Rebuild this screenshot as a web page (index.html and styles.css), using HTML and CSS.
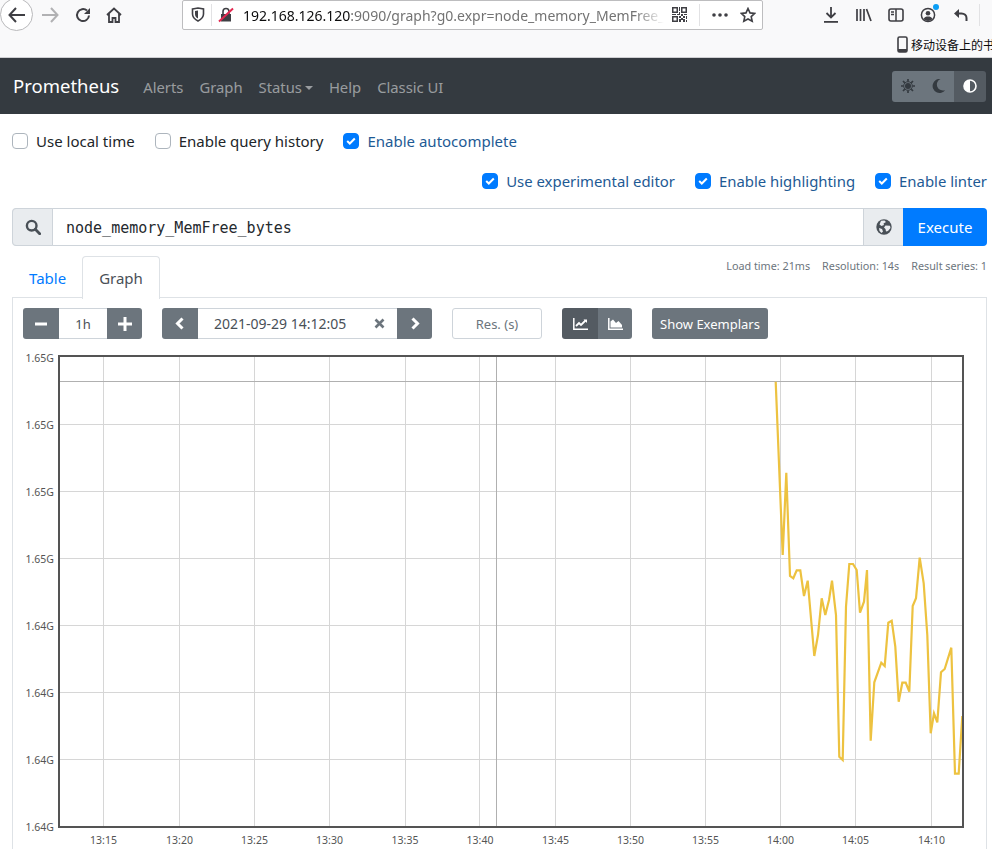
FILE: index.html
```html
<!DOCTYPE html>
<html lang="en">
<head>
<meta charset="utf-8">
<title>Prometheus Time Series Collection and Processing Server</title>
<link rel="stylesheet" href="styles.css">
</head>
<body>
<header class="browser">
  <div class="toolbar">
    <span class="back"><svg width="18" height="16" viewBox="0 0 18 16"><path d="M8 1 1.500 8 8 15M2 8h15" class="ic" stroke-width="2"/></svg></span>
    <svg class="t-forward" width="18" height="16" viewBox="0 0 18 16"><path d="M10 1l6.500 7L10 15M16 8H1" class="ic faint" stroke-width="2"/></svg>
    <svg class="t-reload" width="16" height="16" viewBox="0 0 16 16"><path d="M14 8.500A6 6 0 1 1 12 3.600" class="ic" stroke-width="2"/><path d="M15 1v6H9z" class="fill"/></svg>
    <svg class="t-home" width="16" height="16" viewBox="0 0 16 16"><path d="M1 8 8 1.500 15 8M3 6.500V15h3.500v-4h3v4H13V6.500" class="ic" stroke-width="1.800"/></svg>
    <div class="urlbar">
      <svg class="u-shield" width="14" height="15" viewBox="0 0 14 15"><path d="M1.500 2 7 1l5.500 1v5c0 3.500-2.500 5.500-5.500 7C4 12.500 1.500 10.500 1.500 7z" class="ic" stroke-width="1.600"/><path d="M7 3.500V11.500C5 10.500 4 9 4 7V4z" class="fill"/></svg>
      <span class="u-sep"></span>
      <svg class="u-lock" width="16" height="16" viewBox="0 0 16 16"><path d="M3 7h10v7.500H3z" class="fill"/><path d="M5 7V4.500a3 3 0 0 1 6 0V7" class="ic" stroke-width="1.600"/><path d="M1 14.500 15 1.500" class="slash"/></svg>
      <div class="u-text"><span class="u-host">192.168.126.120</span>:9090/graph?g0.expr=node_memory_MemFree_</div>
      <svg class="u-qr" width="15" height="15" viewBox="0 0 15 15"><path d="M0 0h6v6H0zM1.500 1.500v3h3v-3zM9 0h6v6H9zM10.500 1.500v3h3v-3zM0 9h6v6H0zM1.500 10.500v3h3v-3zM7 0h1v4H7zM7 5h1v3H7zM0 7h4v1H0zM5 7h2v1H5zM9 7h2v2H9zM12 7h3v1h-3zM7 9h2v2H7zM11 9h2v2h-2zM14 9h1v3h-1zM9 11h2v2H9zM7 12h2v3H7zM11 12h2v3h-2zM14 13h1v2h-1z" class="fill"/></svg>
      <span class="u-sep u-sep2"></span>
      <svg class="u-dots" width="16" height="4" viewBox="0 0 16 4"><circle cx="2" cy="2" r="1.800" class="fill"/><circle cx="8" cy="2" r="1.800" class="fill"/><circle cx="14" cy="2" r="1.800" class="fill"/></svg>
      <svg class="u-star" width="16" height="16" viewBox="0 0 16 16"><path d="M8 1.500l2 4.400 4.700.5-3.500 3.200 1 4.700L8 12l-4.200 2.300 1-4.700L1.300 6.400 6 5.900z" class="ic" stroke-width="1.600"/></svg>
    </div>
    <svg class="t-down" width="14" height="16" viewBox="0 0 14 16"><path d="M7 0v10M2.500 6 7 10.500 11.500 6" class="ic" stroke-width="1.800"/><path d="M0 14h14v1.800H0z" class="fill"/></svg>
    <svg class="t-lib" width="16" height="14" viewBox="0 0 16 14"><path d="M1 1v12M4.500 1v12M8 1v12M10.500 1l4.500 12" class="ic" stroke-width="1.700"/></svg>
    <svg class="t-side" width="16" height="14" viewBox="0 0 16 14"><rect x="1" y="1" width="14" height="12" rx="2" class="ic" stroke-width="1.600"/><path d="M8 1v12M3 4h3M3 6.500h3" class="ic" stroke-width="1.500"/></svg>
    <span class="t-acct"><svg width="16" height="16" viewBox="0 0 16 16"><circle cx="8" cy="8" r="6.600" class="ic" stroke-width="1.500"/><circle cx="8" cy="6.300" r="2.300" class="fill"/><path d="M3.500 12c1-2 2.500-2.500 4.500-2.500s3.500.5 4.500 2.500C10.500 14.500 5.500 14.500 3.500 12z" class="fill"/></svg><i class="dot"></i></span>
    <svg class="t-undo" width="15" height="14" viewBox="0 0 15 14"><path d="M1 5.500 6 1v9z" class="fill"/><path d="M5 5.500h3.500c3 0 5 2 5 4.500v3" class="ic" stroke-width="2"/></svg>
    <span class="t-sep"></span>
  </div>
  <div class="bookmarks">
    <svg class="bm-icon" width="11" height="17" viewBox="0 0 11 17"><rect x="1" y="1" width="9" height="15" rx="1.500" class="ic" stroke-width="1.600"/><path d="M1 13h9v3H1z" class="fill"/></svg>
    <span class="bm-text">移动设备上的书签</span>
  </div>
</header>

<nav class="navbar">
  <a class="brand">Prometheus</a>
  <a class="nav-link">Alerts</a>
  <a class="nav-link">Graph</a>
  <a class="nav-link">Status<i class="caret"></i></a>
  <a class="nav-link">Help</a>
  <a class="nav-link">Classic UI</a>
  <div class="theme">
    <span class="theme-btn"><svg width="14" height="14" viewBox="0 0 14 14"><circle cx="7" cy="7" r="3" class="t-f"/><circle cx="7" cy="7" r="4.300" fill="none" stroke="#343a40" stroke-width="1"/><path d="M7 0v2.500M7 11.500V14M0 7h2.500M11.500 7H14M2 2l1.800 1.800M10.200 10.200 12 12M12 2l-1.800 1.800M3.800 10.200 2 12" stroke="#343a40" stroke-width="1.700"/></svg></span>
    <span class="theme-btn"><svg width="14" height="14" viewBox="0 0 14 14"><path d="M8.500 0A7 7 0 1 0 13.300 11 6 6 0 0 1 8.500 0z" class="t-f"/></svg></span>
    <span class="theme-btn on"><svg width="14" height="14" viewBox="0 0 14 14"><circle cx="7" cy="7" r="6" fill="none" stroke="#fff" stroke-width="1.600"/><path d="M7 1a6 6 0 0 0 0 12z" fill="#fff"/></svg></span>
  </div>
</nav>

<main class="main">
  <div class="opts">
    <label class="check"><span class="box"></span>Use local time</label>
    <label class="check"><span class="box"></span>Enable query history</label>
    <label class="check on"><span class="box"><svg width="10" height="8" viewBox="0 0 10 8"><path d="M1.200 4 3.800 6.500 8.800 1.500" class="tick"/></svg></span>Enable autocomplete</label>
  </div>
  <div class="opts right">
    <label class="check on"><span class="box"><svg width="10" height="8" viewBox="0 0 10 8"><path d="M1.200 4 3.800 6.500 8.800 1.500" class="tick"/></svg></span>Use experimental editor</label>
    <label class="check on"><span class="box"><svg width="10" height="8" viewBox="0 0 10 8"><path d="M1.200 4 3.800 6.500 8.800 1.500" class="tick"/></svg></span>Enable highlighting</label>
    <label class="check on"><span class="box"><svg width="10" height="8" viewBox="0 0 10 8"><path d="M1.200 4 3.800 6.500 8.800 1.500" class="tick"/></svg></span>Enable linter</label>
  </div>

  <div class="query">
    <span class="addon first"><svg width="16" height="16" viewBox="0 0 16 16"><circle cx="6.700" cy="6.700" r="4.800" fill="none" stroke="#495057" stroke-width="2.400"/><path d="M10.300 10.300 14.700 14.700" stroke="#495057" stroke-width="2.800" stroke-linecap="round"/></svg></span>
    <div class="expr">node_memory_MemFree_bytes</div>
    <span class="addon globe"><svg width="16" height="16" viewBox="0 0 16 16"><circle cx="8" cy="8" r="7.700" fill="#495057"/><path d="M5 1.800 8.500 1.500 10 3 7.500 4.500 8 6 5.500 7 3.500 5.500zM9.500 6.500 14 6.800 14.500 9 12 12 10 12.500 9.500 10 8 8.500zM3 9l3 1 1 2.500-1.500 1.500L3.500 12z" fill="#e9ecef"/></svg></span>
    <button class="execute">Execute</button>
  </div>

  <div class="tabs-row">
    <div class="tabs">
      <a class="tab">Table</a>
      <a class="tab active">Graph</a>
    </div>
    <div class="stats"><span>Load time: 21ms</span><span>Resolution: 14s</span><span>Result series: 1</span></div>
  </div>

  <section class="card">
    <div class="controls">
      <div class="group">
        <button class="gbtn w36"><svg width="12" height="12" viewBox="0 0 12 12"><path d="M0 6h12" class="ctl"/></svg></button>
        <div class="gfield w48">1h</div>
        <button class="gbtn w35"><svg width="14" height="14" viewBox="0 0 14 14"><path d="M0 7h14M7 0v14" class="ctl"/></svg></button>
      </div>
      <div class="group">
        <button class="gbtn w36"><svg width="10" height="13" viewBox="0 0 10 13"><path d="M7.500 1.500 2.500 6.500 7.500 11.500" class="ctl"/></svg></button>
        <div class="gfield date"><span class="date-text">2021-09-29 14:12:05</span><svg class="clear" width="11" height="11" viewBox="0 0 11 11"><path d="M1.500 1.500l8 8M9.500 1.500l-8 8" fill="none" stroke="#6c757d" stroke-width="2.600"/></svg></div>
        <button class="gbtn w35"><svg width="10" height="13" viewBox="0 0 10 13"><path d="M2.500 1.500 7.500 6.500 2.500 11.500" class="ctl"/></svg></button>
      </div>
      <div class="res">Res. (s)</div>
      <div class="group">
        <button class="gbtn w36 dark"><svg width="15" height="12" viewBox="0 0 15 12"><path d="M.8 0v11.200H15" fill="none" stroke="#fff" stroke-width="1.500"/><path d="M3 8 6 5l2 2 4.500-4.500" fill="none" stroke="#fff" stroke-width="1.800"/><path d="M10.500 1.500H14V5z" fill="#fff"/></svg></button>
        <button class="gbtn w34"><svg width="15" height="12" viewBox="0 0 15 12"><path d="M.8 0v11.200H15" fill="none" stroke="#fff" stroke-width="1.500"/><path d="M2.500 9.500V3.500L5 1.500 8 5l2.500-2 3.500 4v2.500z" fill="#fff"/></svg></button>
      </div>
      <button class="exemplars">Show Exemplars</button>
    </div>
    <svg class="chart" width="973" height="510" viewBox="13 345 973 510">
      <g class="grid">
        <path d="M103.500 357V827M179.500 357V827M254.500 357V827M329.500 357V827M405.500 357V827M479.500 357V827M555.500 357V827M630.500 357V827M705.500 357V827M780.500 357V827M855.500 357V827M931.500 357V827"/>
        <path d="M60 424.500H963M60 491.500H963M60 558.500H963M60 625.500H963M60 692.500H963M60 759.500H963"/>
      </g>
      <path class="cross" d="M496.500 357V827M60 381.500H963"/>
      <polyline class="series" points="775.7,381.7 782.700,555 786.300,472.700 790,576 793.300,578.300 796.700,570.300 800.300,570.300 804,596 807.700,580.700 814.300,656 818,635 821.700,598.300 825.300,615 829,600 832,580.700 836,615 839.300,756.700 842.700,760 846,606.700 849.300,564 853,564 856.700,570 860,612.700 864,601.700 867,570 870.700,740.700 874.300,682.300 881.300,662.700 884.700,666 888.300,622.700 891.700,620.700 895.300,646.700 898.700,701.700 902.300,682.700 905.700,682.700 909.300,691.700 912.700,606 916,598.300 919.700,557.700 923.700,583.300 927.300,635 930.700,733.300 934,713.300 937.300,722.300 941,672.300 944.700,669 951.300,647.700 955,773.700 958.700,773.700 962.300,716"/>
      <rect class="frame" x="59" y="356" width="904" height="471"/>
      <g class="ylab">
        <text x="54" y="362">1.65G</text><text x="54" y="429">1.65G</text><text x="54" y="496">1.65G</text><text x="54" y="563">1.65G</text><text x="54" y="630">1.64G</text><text x="54" y="697">1.64G</text><text x="54" y="764">1.64G</text><text x="54" y="831">1.64G</text>
      </g>
      <g class="xlab">
        <text x="103.500" y="844">13:15</text><text x="179.500" y="844">13:20</text><text x="254.500" y="844">13:25</text><text x="329.500" y="844">13:30</text><text x="405" y="844">13:35</text><text x="480" y="844">13:40</text><text x="555.500" y="844">13:45</text><text x="630.500" y="844">13:50</text><text x="705.500" y="844">13:55</text><text x="780.500" y="844">14:00</text><text x="855.500" y="844">14:05</text><text x="931.500" y="844">14:10</text>
      </g>
    </svg>
  </section>
</main>
</body>
</html>
```

FILE: styles.css
```css
* { box-sizing: border-box; }
html, body { margin: 0; height: 849px; overflow: hidden; }
body { font-family: "Noto Sans", "Open Sans", sans-serif; font-size: 15px; color: #212529; background: #fff; }

.ic { fill: none; stroke: #3f3f44; }
.ic.faint { stroke: #b1b1b3; }
.fill { fill: #3f3f44; }
.slash { stroke: #e22850; stroke-width: 2; fill: none; }

.browser { height: 58px; background: #f9f9fa; border-bottom: 1px solid #cfcfd2; overflow: hidden; }
.toolbar { display: flex; align-items: center; height: 33px; margin-top: -2px; position: relative; }
.back { width: 33px; height: 33px; margin-left: 0; border: 1px solid #b9b9bb; border-radius: 50%; display: flex; align-items: center; justify-content: center; background: #fff; flex: none; }
.t-forward { margin-left: 8px; flex: none; }
.t-reload { margin-left: 16px; flex: none; }
.t-home { margin-left: 15px; flex: none; }
.urlbar { width: 581px; height: 30px; margin-left: 60px; background: #fff; border: 1px solid #bdbdbf; border-radius: 2px; display: flex; align-items: center; flex: none; }
.u-shield { margin-left: 8px; flex: none; }
.u-sep { width: 1px; height: 22px; background: #e2e2e4; margin-left: 6px; flex: none; }
.u-lock { margin-left: 6px; flex: none; }
.u-text { width: 421px; margin-left: 9px; padding-top: 2px; font-size: 14px; color: #737373; white-space: nowrap; overflow: hidden; flex: none; -webkit-mask-image: linear-gradient(to right, #000 93%, transparent); mask-image: linear-gradient(to right, #000 93%, transparent); }
.u-host { color: #0c0c0d; }
.u-qr { margin-left: 8px; flex: none; }
.u-sep2 { margin-left: 12px; }
.u-dots { margin-left: 12px; flex: none; }
.u-star { margin-left: 12px; flex: none; }
.t-down { margin-left: 61px; flex: none; }
.t-lib { margin-left: 18px; flex: none; }
.t-side { margin-left: 16px; flex: none; }
.t-acct { margin-left: 16px; flex: none; position: relative; display: flex; }
.dot { position: absolute; top: -3px; right: -3px; width: 6px; height: 6px; border-radius: 50%; background: #0a9ef5; }
.t-undo { margin-left: 17px; flex: none; }
.t-sep { width: 1px; height: 22px; background: #e2e2e4; margin-left: 11px; flex: none; }
.bookmarks { height: 25px; display: flex; align-items: center; padding-left: 897px; white-space: nowrap; font-family: "Noto Sans CJK SC", sans-serif; font-size: 12px; color: #0c0c0d; gap: 3px; margin-top: 1px; }
.bm-icon { flex: none; }
.bm-text { flex: none; }

.navbar { height: 56px; background: #343a40; display: flex; align-items: center; padding: 0 6px 0 13px; }
.brand { font-size: 18.500px; color: #fff; margin: 0 24px 2px 0; }
.nav-link { font-size: 14.800px; color: rgba(255,255,255,.5); margin-right: 16px; padding-top: 1px; white-space: nowrap; }
.caret { display: inline-block; width: 0; height: 0; margin-left: 3px; vertical-align: 3px; border: 4px solid transparent; border-top-color: rgba(255,255,255,.5); border-bottom: 0; }
.theme { margin-left: auto; display: flex; height: 31px; border-radius: 3px; overflow: hidden; }
.theme-btn { width: 31px; background: #6c757d; display: flex; align-items: center; justify-content: center; }
.theme-btn.on { width: 32px; background: #545b62; }
.t-f { fill: #343a40; }

.main { padding: 0 5px 0 12px; }
.opts { display: flex; height: 40px; align-items: center; gap: 20px; margin-top: 7px; }
.opts + .opts { margin-top: 0; }
.opts.right { justify-content: flex-end; font-size: 14.900px; }
.check { display: flex; align-items: center; color: #212529; white-space: nowrap; }
.check.on { color: #1e5a94; }
.box { width: 16px; height: 16px; margin-right: 8px; border: 1px solid #adb5bd; border-radius: 4px; background: #fff; display: flex; align-items: center; justify-content: center; }
.check.on .box { background: #007bff; border-color: #007bff; }
.tick { fill: none; stroke: #fff; stroke-width: 2; }

.query { display: flex; height: 38px; margin-top: 7px; border: 1px solid #ced4da; border-radius: 4px; }
.addon { width: 41px; background: #e9ecef; display: flex; align-items: center; justify-content: center; flex: none; }
.addon.first { border-right: 1px solid #ced4da; margin: -1px 0 -1px -1px; border-radius: 4px 0 0 4px; border: 1px solid #ced4da; }
.addon.globe { width: 40px; border-left: 1px solid #ced4da; }
.expr { flex: 1; font-family: "DejaVu Sans Mono", monospace; font-size: 15px; line-height: 38px; padding-left: 13px; color: #24292e; }
.execute { width: 84px; margin: -1px -1px -1px 0; border: 0; border-radius: 0 4px 4px 0; background: #007bff; color: #fff; font: inherit; }

.tabs-row { display: flex; justify-content: space-between; height: 52px; }
.tabs { display: flex; align-items: flex-end; margin-top: 10px; }
.tab { height: 42px; padding: 0 16px 0 17px; line-height: 44px; color: #007bff; }
.tab.active { color: #495057; background: #fff; border: 1px solid #dee2e6; border-bottom: 0; border-radius: 4px 4px 0 0; position: relative; z-index: 1; padding: 0 16px; height: 43px; margin-bottom: -1px; line-height: 43px; }
.stats { display: flex; gap: 12px; font-size: 10.800px; color: #6c757d; margin-top: 12px; height: 16px; white-space: nowrap; }

.card { height: 600px; border: 1px solid #dee2e6; margin-top: -1px; padding: 10px 0 0 0; }
.controls { display: flex; height: 31px; gap: 20px; padding-left: 10px; font-size: 13px; color: #495057; }
.group { display: flex; height: 31px; border-radius: 3px; overflow: hidden; flex: none; }
.gbtn { border: 0; padding: 0; background: #6c757d; display: flex; align-items: center; justify-content: center; }
.gbtn.dark { background: #545b62; }
.w36 { width: 36px; } .w35 { width: 35px; } .w34 { width: 34px; }
.ctl { fill: none; stroke: #fff; stroke-width: 3; }
.gfield { border-top: 1px solid #ced4da; border-bottom: 1px solid #ced4da; display: flex; align-items: center; justify-content: center; }
.w48 { width: 48px; }
.date { width: 199px; justify-content: flex-start; padding-left: 16px; font-size: 14px; }
.date-text { flex: 1; white-space: nowrap; }
.clear { margin-right: 12px; flex: none; }
.res { width: 90px; height: 31px; border: 1px solid #ced4da; border-radius: 3px; color: #6c757d; display: flex; align-items: center; justify-content: center; }
.exemplars { width: 116px; height: 31px; border: 0; border-radius: 3px; background: #6c757d; color: #fff; font: inherit; white-space: nowrap; padding: 0; }

.chart { display: block; margin-top: 6px; font-family: "Noto Sans", sans-serif; }
.grid path { stroke: #d6d6d6; stroke-width: 1; fill: none; }
.cross { stroke: #b0b0b0; stroke-width: 1; fill: none; }
.series { fill: none; stroke: #edc240; stroke-width: 2.200; }
.frame { fill: none; stroke: #545454; stroke-width: 2; }
.ylab text { font-size: 10.500px; fill: #545454; text-anchor: end; }
.xlab text { font-size: 10.500px; fill: #545454; text-anchor: middle; }
```
